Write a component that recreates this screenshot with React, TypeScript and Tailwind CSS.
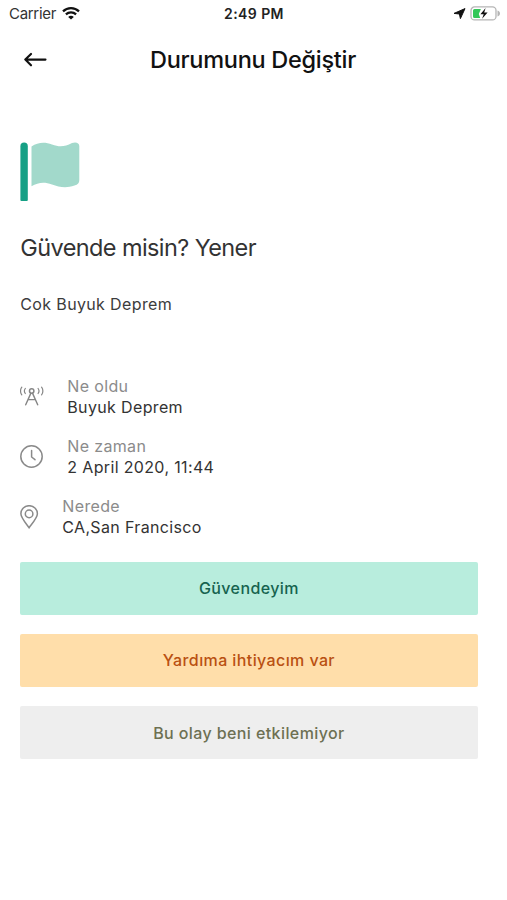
import React from "react";

function StatusBar() {
  return (
    <div className="flex h-7 items-center justify-between pl-[9px] pr-[6px]">
      <div className="flex w-[150px] items-center gap-[6px]">
        <span className="text-[15px] leading-5 tracking-[-0.3px] text-[#333]">Carrier</span>
        <svg width="18" height="14" viewBox="0 0 18 14" fill="none" stroke="#111" strokeWidth="2.2">
          <path d="M1 4.4C5.4 0.1 12.6 0.1 17 4.4" />
          <path d="M3.9 7.4C6.8 4.6 11.2 4.6 14.1 7.4" />
          <path d="M9 12.6L6.2 9.9C7.8 8.5 10.2 8.5 11.8 9.9Z" fill="#111" stroke="none" />
        </svg>
      </div>
      <span className="mr-[2px] text-[14px] leading-5 font-semibold tracking-[0.42px] text-[#222]">2:49 PM</span>
      <div className="flex w-[150px] items-center justify-end gap-[4px]">
        <svg width="13" height="12" viewBox="0 0 13 12">
          <path d="M12 0.6L7.4 10.6L6.4 6L1 5.4Z" fill="#111" stroke="#111" strokeWidth="1" strokeLinejoin="round" />
        </svg>
        <svg width="31" height="16" viewBox="0 0 31 16">
          <rect x="1" y="0.9" width="25" height="13" rx="3.5" fill="none" stroke="#b5b5b5" strokeWidth="1.3" />
          <path d="M27.5 4.5C30.8 5.7 30.8 9.3 27.5 10.5Z" fill="#b5b5b5" />
          <path d="M4.5 2.9H10.9L8.8 7.9L10.2 11.9H4.5Q3 11.9 3 10.4V4.4Q3 2.9 4.5 2.9Z" fill="#34c759" />
          <path d="M15.6 2.1L10.4 8.2H13.7L12.1 12.7L17.6 6.5H14.2Z" fill="#111" />
        </svg>
      </div>
    </div>
  );
}

function Header() {
  return (
    <header className="grid h-16 grid-cols-[60px_1fr_61px] items-center">
      <svg className="ml-6" width="24" height="16" viewBox="0 0 24 16" fill="none" stroke="#111" strokeWidth="2.1" strokeLinecap="round" strokeLinejoin="round">
        <path d="M21.5 7.6H1.5M7 1.9L1.3 7.6L7 13.3" />
      </svg>
      <h1 className="text-center text-[23.5px] leading-8 font-medium tracking-[-0.28px] whitespace-nowrap text-[#111]">Durumunu Değiştir</h1>
    </header>
  );
}

function Flag() {
  return (
    <svg width="60" height="60" viewBox="0 0 60 60">
      <path d="M0.4 58V4.3Q0.4 0.6 4.1 0.6Q7.8 0.6 7.8 4.3V58Q7.8 59 6.8 59H1.4Q0.4 59 0.4 58Z" fill="#16a085" />
      <path d="M11.5 4.5C18 0 25 -0.2 32 2.5C40 5.5 45 4.5 52 1C56 -0.5 59.3 1 59.3 4V38C59.3 41 58 42.5 54.5 43.5C46 46.5 39 45 32 42.5C24 39.5 18 40.5 11.5 44.3Z" fill="#a2d9cb" />
    </svg>
  );
}

function AntennaIcon() {
  return (
    <svg width="24" height="24" viewBox="0 0 24 24" fill="none" stroke="#858585" strokeWidth="1.2" strokeLinecap="round">
      <circle cx="11.7" cy="6" r="2.2" strokeWidth="1.5" />
      <path d="M10.8 8.4L5.7 19.8M12.6 8.4L17.7 19.8M8.2 14.6H15.2" strokeWidth="1.4" />
      <path d="M1.8 2.2C0.1 4.2 0.1 7.8 1.8 9.8M5.3 3.5C4.2 5 4.2 7 5.3 8.5M21.6 2.2C23.3 4.2 23.3 7.8 21.6 9.8M18.1 3.5C19.2 5 19.2 7 18.1 8.5" />
    </svg>
  );
}

function ClockIcon() {
  return (
    <svg width="24" height="24" viewBox="0 0 24 24" fill="none" stroke="#8a8a8a" strokeWidth="1.5" strokeLinecap="round">
      <circle cx="11.5" cy="11.5" r="10.7" />
      <path d="M11.6 5.5V12L15 14.7" />
    </svg>
  );
}

function PinIcon() {
  return (
    <svg width="19" height="24" viewBox="0 0 19 24" fill="none" stroke="#8a8a8a" strokeWidth="1.5">
      <path d="M9.1 22.7C6.3 18.8 0.9 12.7 0.9 8.7C0.9 4.1 4.6 0.7 9.1 0.7S17.4 4.1 17.4 8.7C17.4 12.7 11.9 18.8 9.1 22.7Z" />
      <circle cx="9.1" cy="8.9" r="3.8" />
    </svg>
  );
}

function Detail({ icon, label, value }: { icon: React.ReactNode; label: string; value: string }) {
  return (
    <div className="flex h-[60px] items-center">
      <div className="mr-[23px]">{icon}</div>
      <div className="text-[16px] leading-[21px] tracking-[0.35px]">
        <div className="text-[#8b8b8b]">{label}</div>
        <div className="text-[#333]">{value}</div>
      </div>
    </div>
  );
}

const button = "h-[53.5px] w-full rounded-[2px] text-[16px] font-medium tracking-[0.4px]";

export default function App() {
  return (
    <div className="h-[900px] overflow-hidden bg-white font-['Inter','Liberation_Sans',sans-serif]">
      <StatusBar />
      <Header />
      <main className="pt-[50px] pr-[29.5px] pl-[20.3px]">
        <Flag />
        <h2 className="mt-[30px] text-[23.5px] leading-8 tracking-[-0.6px] text-[#333]">Güvende misin? Yener</h2>
        <p className="mt-7 text-[16px] leading-6 tracking-[0.36px] text-[#3c3c3c]">Cok Buyuk Deprem</p>
        <section className="mt-[51px]">
          <Detail icon={<AntennaIcon />} label="Ne oldu" value="Buyuk Deprem" />
          <Detail icon={<ClockIcon />} label="Ne zaman" value="2 April 2020, 11:44" />
          <Detail icon={<PinIcon />} label="Nerede" value="CA,San Francisco" />
        </section>
        <div className="mt-[14.6px] flex flex-col gap-[18.6px]">
          <button className={`${button} bg-[#b8eddd] text-[#16634f]`}>Güvendeyim</button>
          <button className={`${button} bg-[#ffdeaa] text-[#b95012]`}>Yardıma ihtiyacım var</button>
          <button className={`${button} bg-[#eeeeee] text-[#6d7052]`}>Bu olay beni etkilemiyor</button>
        </div>
      </main>
    </div>
  );
}
